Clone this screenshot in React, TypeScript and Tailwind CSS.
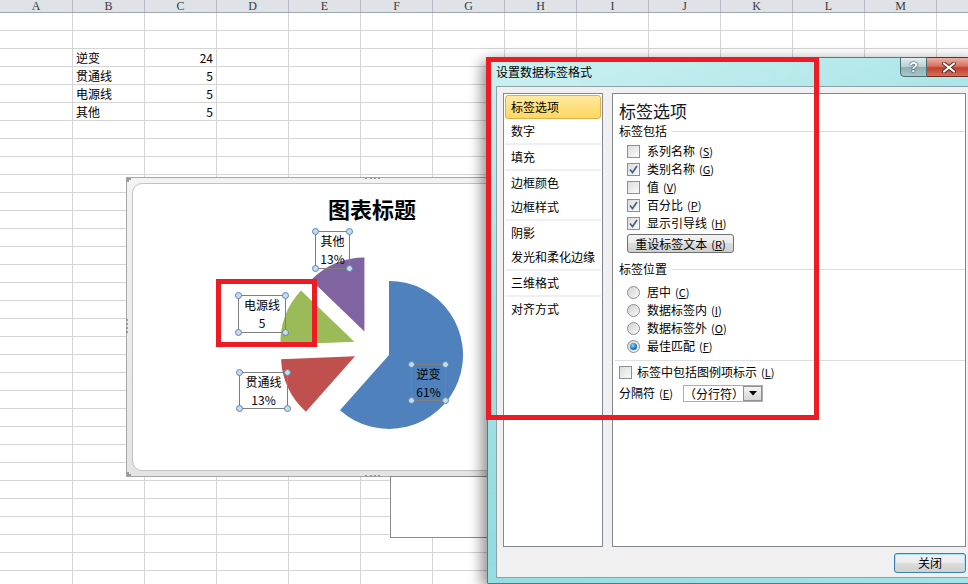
import React from 'react'

const COLS = ['A', 'B', 'C', 'D', 'E', 'F', 'G', 'H', 'I', 'J', 'K', 'L', 'M', 'N']
const ROW_COUNT = 32

// sheet data, keyed by row index (0 = row 1)
const DATA: Record<number, [string, string]> = {
  2: ['逆变', '24'],
  3: ['贯通线', '5'],
  4: ['电源线', '5'],
  5: ['其他', '5'],
}

// pie geometry, relative to the chart frame's padding box
const CX = 244.7
const CY = 170.4
const R = 74
const EXPLODE = 18.5

const rad = (d: number) => (d * Math.PI) / 180

function slicePath(a0: number, a1: number) {
  const mid = rad((a0 + a1) / 2)
  const cx = CX + EXPLODE * Math.sin(mid)
  const cy = CY - EXPLODE * Math.cos(mid)
  const x0 = cx + R * Math.sin(rad(a0))
  const y0 = cy - R * Math.cos(rad(a0))
  const x1 = cx + R * Math.sin(rad(a1))
  const y1 = cy - R * Math.cos(rad(a1))
  return `M${cx} ${cy} L${x0} ${y0} A${R} ${R} 0 ${a1 - a0 > 180 ? 1 : 0} 1 ${x1} ${y1} Z`
}

const values = [24, 5, 5, 5]
const colors = ['#4f81bd', '#c0504d', '#9bbb59', '#8064a2']
const total = values.reduce((a, b) => a + b, 0)
const slices = values.map((v, i) => {
  const start = (values.slice(0, i).reduce((a, b) => a + b, 0) / total) * 360
  return { d: slicePath(start, start + (v / total) * 360), color: colors[i] }
})

function Handle({ pos }: { pos: string }) {
  return <span className={`absolute w-[7px] h-[7px] rounded-full border border-[#5a86b4] bg-[#c9dbeb] ${pos}`} />
}

function DataLabel({ pos, top, bottom }: { pos: string; top: string; bottom: string }) {
  return (
    <div className={`absolute border border-[#7f7f7f] flex flex-col items-center justify-center text-[12px] leading-[18px] ${pos}`}>
      <span>{top}</span>
      <span>{bottom}</span>
      <Handle pos="-left-[4px] -top-[4px]" />
      <Handle pos="-right-[4px] -top-[4px]" />
      <Handle pos="-left-[4px] -bottom-[4px]" />
      <Handle pos="-right-[4px] -bottom-[4px]" />
    </div>
  )
}

function Key({ k }: { k: string }) {
  return (
    <span className="ml-[4px] text-[11px]">
      (<span className="underline">{k}</span>)
    </span>
  )
}

function Checkbox({ checked }: { checked?: boolean }) {
  return (
    <span className="w-[13px] h-[13px] shrink-0 border border-[#8e8f8f] bg-[linear-gradient(135deg,#dcdcdc,#fbfbfb)] flex items-center justify-center">
      {checked && (
        <svg width="11" height="11" viewBox="0 0 11 11">
          <path d="M2 5.5 L4.5 8.5 L9 2" fill="none" stroke="#4a5f8c" strokeWidth="1.7" />
        </svg>
      )}
    </span>
  )
}

function Radio({ checked }: { checked?: boolean }) {
  return (
    <span className="w-[13px] h-[13px] shrink-0 rounded-full border border-[#8e8f8f] bg-[linear-gradient(135deg,#d2d2d2,#f7f7f7)] flex items-center justify-center">
      {checked && <span className="w-[7px] h-[7px] rounded-full bg-[radial-gradient(circle_at_40%_35%,#9ad8ff,#1a78c8_55%,#0b4e8a)]" />}
    </span>
  )
}

function GroupTitle({ text }: { text: string }) {
  return (
    <div className="flex items-center h-[18px]">
      <span>{text}</span>
      <span className="flex-1 h-px bg-[#d5dfe5] ml-[5px]" />
    </div>
  )
}

const navItems = [
  { label: '标签选项', selected: true },
  { label: '数字', sep: true },
  { label: '填充', sep: true },
  { label: '边框颜色' },
  { label: '边框样式', sep: true },
  { label: '阴影' },
  { label: '发光和柔化边缘', sep: true },
  { label: '三维格式', sep: true },
  { label: '对齐方式' },
]

function Sheet() {
  return (
    <div className="absolute inset-0">
      <div className="flex h-[13px] bg-[#dfe3e8] border-b border-[#9ea6b0]">
        {COLS.map((c, i) => (
          <div
            key={c}
            className={`${i === 0 ? 'w-[73px]' : 'w-[72px]'} shrink-0 border-r border-[#b3bbc4] text-center text-[12px] leading-[12px] text-[#3a3a3a] font-['Liberation_Serif',serif]`}
          >
            {c === 'N' ? '' : c}
          </div>
        ))}
      </div>
      {Array.from({ length: ROW_COUNT }).map((_, r) => (
        <div key={r} className="flex h-[18px] border-b border-[#d4d4d4]">
          {COLS.map((c, i) => (
            <div
              key={c}
              className={`${i === 0 ? 'w-[73px]' : 'w-[72px]'} shrink-0 border-r border-[#d4d4d4] px-[3px] leading-[17px] ${i === 2 ? 'text-right' : ''}`}
            >
              {DATA[r] && i === 1 ? DATA[r][0] : null}
              {DATA[r] && i === 2 ? DATA[r][1] : null}
            </div>
          ))}
        </div>
      ))}
    </div>
  )
}

function Chart() {
  return (
    <div className="absolute left-[126px] top-[177px] w-[492px] h-[300px] border border-[#a6a6a6] bg-[linear-gradient(180deg,#f3f3f3,#e4e4e4)] p-[5px]">
      <div className="h-full rounded-[10px] border border-[#c2c2c2] bg-white flex flex-col items-center pt-[11px]">
        <div className="text-[22px] leading-[26px] font-bold text-black">图表标题</div>
      </div>
      {/* frame grips */}
      <span className="absolute left-[238px] -top-[1px] w-[15px] border-t-2 border-dotted border-[#9a9a9a]" />
      <span className="absolute left-[238px] -bottom-[1px] w-[15px] border-t-2 border-dotted border-[#9a9a9a]" />
      <span className="absolute -left-[1px] top-[141px] h-[14px] border-l-2 border-dotted border-[#9a9a9a]" />
      <span className="absolute left-0 top-0 w-[4px] h-[4px] border-t-2 border-l-2 border-dotted border-[#9a9a9a]" />
      <span className="absolute left-0 bottom-0 w-[4px] h-[4px] border-b-2 border-l-2 border-dotted border-[#9a9a9a]" />

      <svg className="absolute left-0 top-0" width="490" height="298">
        {slices.map((s, i) => (
          <path key={i} d={s.d} fill={s.color} />
        ))}
      </svg>

      <DataLabel pos="left-[188px] top-[53px] w-[35px] h-[38px]" top="其他" bottom="13%" />
      <DataLabel pos="left-[111px] top-[117px] w-[48px] h-[38px]" top="电源线" bottom="5" />
      <DataLabel pos="left-[112px] top-[194px] w-[49px] h-[37px]" top="贯通线" bottom="13%" />
      <DataLabel pos="left-[284px] top-[186px] w-[35px] h-[37px]" top="逆变" bottom="61%" />
    </div>
  )
}

function Dialog() {
  return (
    <div className="absolute left-[487px] top-[57px] w-[495px] h-[527px] rounded-t-[7px] border border-[#4f7d84] bg-[linear-gradient(160deg,#cdf1f2_0%,#a4e3e5_35%,#93dcdf_70%,#a6e3e5_100%)] shadow-[-5px_3px_14px_rgba(0,0,0,0.45)] flex flex-col px-[8px] pb-[5px]">
      <div className="h-[28px] flex items-center text-[12px] text-black">设置数据标签格式</div>

      {/* caption buttons */}
      <div className="absolute left-[412px] -top-[1px] flex">
        <div className="w-[27px] h-[20px] rounded-bl-[4px] border border-[#4d6d73] bg-[linear-gradient(180deg,#e3eff0_0%,#b9d0d3_48%,#8db0b4_52%,#a9c6c9_100%)] flex items-center justify-center text-[14px] font-bold text-white font-['Liberation_Sans',sans-serif] [text-shadow:0_0_2px_#2a3a40,0_0_1px_#2a3a40]">
          ?
        </div>
        <div className="w-[44px] h-[20px] border border-l-0 border-[#6b2a22] bg-[linear-gradient(180deg,#eab2a7_0%,#d9725f_45%,#c0402d_55%,#d86d57_100%)] flex items-center justify-center">
          <svg width="14" height="11" viewBox="0 0 14 11">
            <path d="M2 1.5 L12 9.5 M12 1.5 L2 9.5" stroke="#5a2a22" strokeWidth="4" strokeLinecap="round" />
            <path d="M2 1.5 L12 9.5 M12 1.5 L2 9.5" stroke="#ffffff" strokeWidth="2.2" strokeLinecap="round" />
          </svg>
        </div>
      </div>

      <div className="flex-1 border border-[#8aa2a8] bg-[#f0f0f0] pt-[6px] px-[6px] pb-[4px] flex flex-col text-[12px] text-black">
        <div className="flex gap-[9px] h-[454px]">
          {/* category list */}
          <div className="w-[100px] shrink-0 border border-[#828790] bg-white pt-px">
            {navItems.map((item) => (
              <React.Fragment key={item.label}>
                <div
                  className={`mx-px h-[24px] px-[5px] border flex items-center ${
                    item.selected
                      ? 'rounded-[3px] border-[#dcb04f] bg-[linear-gradient(180deg,#ffeaa0,#ffd660)]'
                      : 'border-transparent'
                  }`}
                >
                  {item.label}
                </div>
                {item.sep && <div className="mx-px h-[2px] bg-[#eef0f5]" />}
              </React.Fragment>
            ))}
          </div>

          {/* options */}
          <div className="flex-1 border border-[#828790] bg-white pl-[6px] pt-[7px]">
            <div className="text-[17px] leading-[20px] text-[#141828]">标签选项</div>
            <div className="mt-px">
              <GroupTitle text="标签包括" />
            </div>
            <div className="mt-[2px] pl-[8px]">
              {[
                ['系列名称', 'S', false],
                ['类别名称', 'G', true],
                ['值', 'V', false],
                ['百分比', 'P', true],
                ['显示引导线', 'H', true],
              ].map(([t, k, c]) => (
                <div key={t as string} className="h-[18px] flex items-center gap-[7px]">
                  <Checkbox checked={c as boolean} />
                  <span>
                    {t as string}
                    <Key k={k as string} />
                  </span>
                </div>
              ))}
              <button className="mt-[2px] w-[107px] h-[19px] rounded-[3px] border border-[#707070] bg-[linear-gradient(180deg,#f3f3f3_0%,#ebebeb_50%,#dddddd_50%,#cfcfcf_100%)] text-[12px] leading-[17px]">
                重设标签文本<Key k="R" />
              </button>
            </div>

            <div className="mt-[7px]">
              <GroupTitle text="标签位置" />
            </div>
            <div className="mt-[5px] pl-[8px]">
              {[
                ['居中', 'C', false],
                ['数据标签内', 'I', false],
                ['数据标签外', 'O', false],
                ['最佳匹配', 'F', true],
              ].map(([t, k, c]) => (
                <div key={t as string} className="h-[18px] flex items-center gap-[7px]">
                  <Radio checked={c as boolean} />
                  <span>
                    {t as string}
                    <Key k={k as string} />
                  </span>
                </div>
              ))}
            </div>

            <div className="mt-[5px] -ml-[4px] h-px bg-[#dcdfe2]" />

            <div className="mt-[2px] h-[18px] flex items-center gap-[5px]">
              <Checkbox />
              <span>
                标签中包括图例项标示<Key k="L" />
              </span>
            </div>
            <div className="mt-[2px] h-[20px] flex items-center">
              <span className="w-[64px] shrink-0">
                分隔符<Key k="E" />
              </span>
              <div className="flex h-[17px] w-[80px] border border-[#abadb3] bg-white">
                <span className="flex-1 text-center leading-[15px]">（分行符）</span>
                <span className="w-[19px] border border-[#8e8f8f] bg-[linear-gradient(180deg,#f4f4f4,#d6d6d6)] flex items-center justify-center">
                  <svg width="8" height="5" viewBox="0 0 8 5">
                    <path d="M0 0 H8 L4 4.5 Z" fill="#000" />
                  </svg>
                </span>
              </div>
            </div>
          </div>
        </div>

        <div className="mt-[6px] flex justify-end">
          <button className="w-[72px] h-[20px] rounded-[3px] border border-[#3c7fb1] bg-[linear-gradient(180deg,#f2f2f2_0%,#ebebeb_50%,#dddddd_50%,#cfcfcf_100%)] shadow-[inset_0_0_0_1px_#a6e1f7] text-[12px] leading-[18px]">
            关闭
          </button>
        </div>
      </div>
    </div>
  )
}

export default function App() {
  return (
    <div className="relative w-[968px] h-[584px] overflow-hidden bg-white font-['Noto_Sans_CJK_SC',sans-serif] text-[12px] text-black">
      <Sheet />
      <Chart />
      {/* empty pane behind the dialog */}
      <div className="absolute left-[390px] top-[476px] w-[110px] h-[62px] border border-[#8c8c8c] bg-white" />
      <Dialog />
      {/* red annotation boxes */}
      <div className="absolute left-[216px] top-[279px] w-[101px] h-[68px] border-[5px] border-[#ed1c24]" />
      <div className="absolute left-[486px] top-[57px] w-[333px] h-[363px] border-[5px] border-[#ed1c24]" />
    </div>
  )
}
